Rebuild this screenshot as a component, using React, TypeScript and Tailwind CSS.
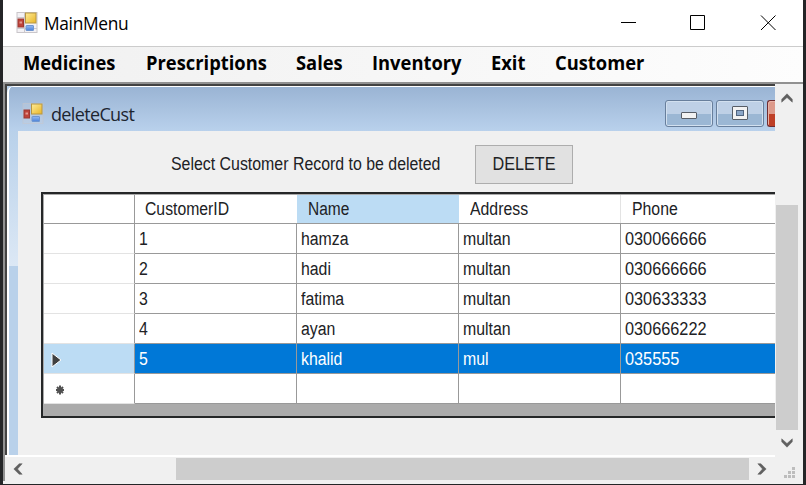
import React from "react";

const menuItems = [
  { label: "Medicines", box: "w-[123px]" },
  { label: "Prescriptions", box: "w-[150px]" },
  { label: "Sales", box: "w-[76px]" },
  { label: "Inventory", box: "w-[119px]" },
  { label: "Exit", box: "w-[64px]" },
  { label: "Customer", box: "w-[100px]" },
];

const records = [
  ["1", "hamza", "multan", "030066666"],
  ["2", "hadi", "multan", "030666666"],
  ["3", "fatima", "multan", "030633333"],
  ["4", "ayan", "multan", "030666222"],
  ["5", "khalid", "mul", "035555"],
  ["", "", "", ""],
];

const formFont = "font-['Liberation_Sans',sans-serif] text-[18px] whitespace-nowrap";

function FormIcon({ framed = false }: { framed?: boolean }) {
  return (
    <svg width="22" height="22" viewBox="0 0 22 22" className="shrink-0">
      <defs>
        <linearGradient id="gold" x1="0" y1="0" x2="1" y2="1">
          <stop offset="0" stopColor="#ffec98" />
          <stop offset="1" stopColor="#e8b526" />
        </linearGradient>
        <linearGradient id="azure" x1="0" y1="0" x2="0" y2="1">
          <stop offset="0" stopColor="#94b9f4" />
          <stop offset="1" stopColor="#4b82d8" />
        </linearGradient>
      </defs>
      <rect x="1" y=".5" width="20" height="20" fill={framed ? "#f3f1f4" : "#c5cedc"} fillOpacity={framed ? 1 : 0.35} stroke="#c9c6ca" strokeOpacity={framed ? 1 : 0.5} />
      {framed && <path d="M8.500 1v19M1 16.500h20M1 5.500h8" stroke="#cbc8cc" />}
      <rect x="9.500" y="1" width="10.500" height="10" fill="url(#gold)" stroke="#b89742" />
      <rect x="2" y="7" width="5.500" height="8" fill="#be4239" stroke="#9b3832" />
      <path d="M3.500 9.500h2.500v2h-2.500z" fill="#e3988e" />
      <rect x="10" y="13.500" width="7.500" height="5" rx=".5" fill="url(#azure)" stroke="#6f96d0" />
    </svg>
  );
}

function Chevron({ turn }: { turn: string }) {
  return (
    <svg width="12" height="10" viewBox="0 0 12 10" className={turn}>
      <path d="M.7 6.200 6 .8l5.300 5.400v3L6 4.500.7 9.200z" fill="#606060" stroke="#606060" strokeWidth=".5" />
    </svg>
  );
}

function TitleBar() {
  return (
    <header className="flex h-[46px] shrink-0 items-center bg-white pl-[13px]">
      <FormIcon framed />
      <span className="mt-px ml-[6px] origin-left scale-x-[.965] font-['Open_Sans',sans-serif] text-[18px] tracking-[-0.35px] text-black">MainMenu</span>
      <svg width="156" height="16" className="mr-[26px] ml-auto" fill="none" stroke="#000">
        <path d="M0 7.500h15M69.500 .5h14v14h-14z" />
        <path d="m140 .5 14.500 14.500m0-14.500-14.500 14.500" />
      </svg>
    </header>
  );
}

const captionButton =
  "flex h-[27px] w-[48px] justify-center rounded-[3px] border border-[#687f9c] bg-linear-to-b from-[#bed0e6] from-50% to-[#9bb7d4] to-50% shadow-[inset_0_0_0_1px_#d2e0ef]";

function ChildTitle() {
  return (
    <div className="flex h-[45px] shrink-0 items-center border-t border-white bg-linear-to-b from-[#9ab4d4] to-[#b9d1ec] pt-[9px] pl-[13px]">
      <FormIcon />
      <span className="mt-[2px] ml-[7px] font-['Open_Sans',sans-serif] text-[18px] tracking-[-0.65px] text-[#1d2530]">deleteCust</span>
      <div className="mr-[-1px] ml-auto flex gap-[3px]">
        <div className={captionButton}>
          <i className="mt-[11px] h-[7px] w-[16px] rounded-[1px] border border-[#575d66] bg-[#f2f2f2]" />
        </div>
        <div className={captionButton}>
          <i className="mt-[5px] flex h-[14px] w-[16px] items-center justify-center rounded-[1px] border border-[#575d66] bg-[#f2f2f2]">
            <b className="h-[6px] w-[8px] border border-[#51647e] bg-[#8ba6c7]" />
          </i>
        </div>
        <div className="h-[27px] w-[9px] rounded-l-[3px] border border-r-0 border-[#712d31] bg-linear-to-b from-[#dd9a8b] from-50% to-[#bf4027] to-50% shadow-[inset_1px_1px_#e8b2a6]" />
      </div>
    </div>
  );
}

function RecordGrid() {
  return (
    <div className="ml-[23px] h-[226px] shrink-0 overflow-hidden border-y-2 border-l-2 border-[#252728] bg-[#ababab]">
      <div className={`${formFont} flex flex-col border-t border-l border-[#aaa] text-[#202124]`}>
        <div className="grid h-[29px] grid-cols-[91px_162px_162px_1fr] border-b border-[#999] bg-white">
          <div className="border-r border-[#999]" />
          <div className="flex items-center pt-px pl-[10px]"><span className="origin-left scale-x-[.875]">CustomerID</span></div>
          <div className="flex items-center bg-[#bcdcf4] pt-px pl-[11px]"><span className="origin-left scale-x-[.86]">Name</span></div>
          <div className="grid grid-cols-[162px_1fr]">
            <div className="flex items-center border-r border-[#e3e3e3] pt-px pl-[11px]"><span className="origin-left scale-x-[.88]">Address</span></div>
            <div className="flex items-center pt-px pl-[11px]"><span className="origin-left scale-x-[.88]">Phone</span></div>
          </div>
        </div>
        {records.map((record, index) => (
          <div key={index} className={`grid h-[30px] grid-cols-[91px_162px_162px_162px_1fr] grid-rows-[30px] ${index === 4 ? "bg-[#0078d7] text-white" : "bg-white"}`}>
            <div className={`flex items-center border-r border-b border-r-[#999] border-b-[#e3e3e3] pt-[3px] ${index === 4 ? "bg-[#bcdcf4]" : ""}`}>
              {index === 4 && <svg width="12" height="16" className="ml-[7px]"><path d="M1 1v14l9-7z" fill="#404040" stroke="white" /></svg>}
              {index === 5 && <svg width="10" height="10" className="ml-[11px]" stroke="#505050" strokeWidth="2"><path d="M5 .5v9M1 5h8M2 2l6 6M8 2 2 8" /></svg>}
            </div>
            {record.map((value, column) => (
              <div key={column} className={`flex items-center border-b border-[#999] pt-[2px] pl-[4px] ${column < 3 ? "border-r" : ""}`}>
                <span className={column === 3 ? "origin-left scale-x-[.905]" : "origin-left scale-x-[.88]"}>{value}</span>
              </div>
            ))}
          </div>
        ))}
      </div>
    </div>
  );
}

export default function App() {
  return (
    <div className="h-[485px] w-[806px] overflow-hidden bg-[#242527] pr-[3px] pb-px pl-[3px]">
      <div className="flex h-[484px] flex-col bg-[#f0f0f0]">
        <TitleBar />
        <nav className="flex h-[36px] shrink-0 items-center border-t border-[#ccc] bg-linear-to-r from-[#f0f0f0] to-[#fdfdfd] pb-[2px] pl-[20px]">
          {menuItems.map((item) => (
            <div key={item.label} className={`${item.box} shrink-0 font-['Open_Sans',sans-serif] text-[19px] font-bold text-black`}>
              <span className="inline-block origin-left scale-x-[.965]">{item.label}</span>
            </div>
          ))}
        </nav>
        <div className="flex h-[399px] shrink-0 border-t-2 border-l-2 border-[#919191] pr-[3px]">
          <div className="w-[770px] shrink-0">
            <main className="flex h-[371px] overflow-hidden border-t-2 border-l-2 border-[#424242] bg-[#b9d1ea]">
              <div className="flex w-full flex-col overflow-hidden rounded-tl-[7px] border-l-2 border-white">
                <ChildTitle />
                <div className="flex min-h-0 flex-1">
                  <div className="flex w-[9px] shrink-0 flex-col">
                    <div className="h-[135px] bg-linear-to-b from-[#b9d1ea] to-[#dce8f5]" />
                  </div>
                  <div className="flex min-w-0 flex-1 flex-col bg-[#f0f0f0]">
                    <div className="flex h-[61px] shrink-0 pt-[14px] pl-[153px]">
                      <span className={`${formFont} w-[304px] origin-left scale-x-[.883] pt-[6px] text-[#202124]`}>Select Customer Record to be deleted</span>
                      <button className={`${formFont} flex h-[39px] w-[98px] items-center justify-center border border-[#adadad] bg-[#e1e1e1] text-[#202124]`}>
                        <span className="scale-x-[.9]">DELETE</span>
                      </button>
                    </div>
                    <RecordGrid />
                  </div>
                </div>
              </div>
            </main>
            <div className="flex h-[25px] items-center border-t-2 border-white">
              <div className="flex w-[171px] shrink-0 pl-[7px]"><Chevron turn="-rotate-90" /></div>
              <div className="h-[22px] w-[573px] shrink-0 bg-[#cdcdcd]" />
              <div className="flex flex-1 justify-center"><Chevron turn="rotate-90" /></div>
            </div>
          </div>
          <div className="flex w-[25px] shrink-0 flex-col">
            <div className="flex h-[121px] shrink-0 justify-center pt-[9px] pr-px"><Chevron turn="" /></div>
            <div className="ml-px h-[225px] w-[22px] shrink-0 bg-[#cdcdcd]" />
            <div className="flex h-[27px] shrink-0 justify-center pt-[8px] pr-px"><Chevron turn="rotate-180" /></div>
            <svg width="13" height="13" className="mt-[9px] ml-[8px]" fill="#bdbdbd">
              <path d="M9 1h3v3H9zM5 5h3v3H5zM9 5h3v3H9zM1 9h3v3H1zM5 9h3v3H5zM9 9h3v3H9z" />
            </svg>
          </div>
        </div>
      </div>
    </div>
  );
}
